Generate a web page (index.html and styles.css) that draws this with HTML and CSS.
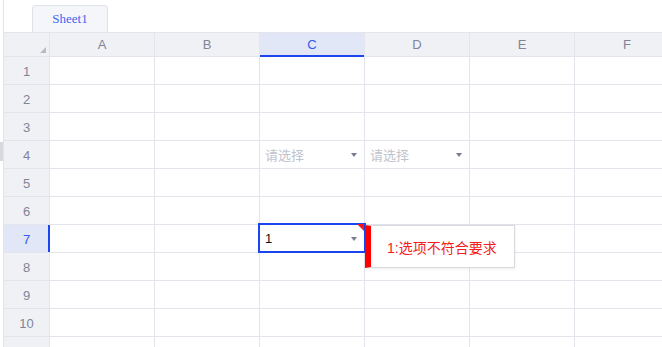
FILE: index.html
```html
<!DOCTYPE html>
<html lang="zh">
<head>
  <meta charset="UTF-8">
  <title>Sheet1</title>
  <link rel="stylesheet" href="styles.css">
</head>
<body>
  <div class="edge-handle"></div>
  <div class="book">
    <div class="tabs">
      <div class="tab">Sheet1</div>
    </div>
    <div class="sheet">
      <div class="corner"></div>
      <div class="col-head">A</div>
      <div class="col-head">B</div>
      <div class="col-head active">C</div>
      <div class="col-head">D</div>
      <div class="col-head">E</div>
      <div class="col-head">F</div>

      <div class="row-head">1</div><div class="cell"></div><div class="cell"></div><div class="cell"></div><div class="cell"></div><div class="cell"></div><div class="cell"></div>
      <div class="row-head">2</div><div class="cell"></div><div class="cell"></div><div class="cell"></div><div class="cell"></div><div class="cell"></div><div class="cell"></div>
      <div class="row-head">3</div><div class="cell"></div><div class="cell"></div><div class="cell"></div><div class="cell"></div><div class="cell"></div><div class="cell"></div>
      <div class="row-head">4</div><div class="cell"></div><div class="cell"></div>
      <div class="cell select"><span class="placeholder">请选择</span><span class="arrow"></span></div>
      <div class="cell select"><span class="placeholder">请选择</span><span class="arrow"></span></div>
      <div class="cell"></div><div class="cell"></div>
      <div class="row-head">5</div><div class="cell"></div><div class="cell"></div><div class="cell"></div><div class="cell"></div><div class="cell"></div><div class="cell"></div>
      <div class="row-head">6</div><div class="cell"></div><div class="cell"></div><div class="cell"></div><div class="cell"></div><div class="cell"></div><div class="cell"></div>
      <div class="row-head active">7</div><div class="cell"></div><div class="cell"></div>
      <div class="cell select current invalid">
        <span class="value">1</span><span class="arrow"></span>
        <div class="tip">1:选项不符合要求</div>
      </div>
      <div class="cell"></div><div class="cell"></div><div class="cell"></div>
      <div class="row-head">8</div><div class="cell"></div><div class="cell"></div><div class="cell"></div><div class="cell"></div><div class="cell"></div><div class="cell"></div>
      <div class="row-head">9</div><div class="cell"></div><div class="cell"></div><div class="cell"></div><div class="cell"></div><div class="cell"></div><div class="cell"></div>
      <div class="row-head">10</div><div class="cell"></div><div class="cell"></div><div class="cell"></div><div class="cell"></div><div class="cell"></div><div class="cell"></div>
      <div class="row-head blank"></div><div class="cell"></div><div class="cell"></div><div class="cell"></div><div class="cell"></div><div class="cell"></div><div class="cell"></div>
    </div>
  </div>
</body>
</html>
```

FILE: styles.css
```css
html, body { margin: 0; overflow: hidden; background: #fff; }
body { font-family: "Liberation Sans", "Noto Sans CJK SC", sans-serif; font-size: 13px; width: 662px; height: 347px; position: relative; }

.edge-handle { position: absolute; left: 0; top: 142px; width: 3px; height: 19px; background: #d8d9de; }

.book { margin-left: 3px; border-left: 1px solid #e2e3eb; width: 658px; height: 347px; overflow: hidden; }

.tabs { height: 32px; padding-left: 28px; display: flex; align-items: flex-end; }
.tab { width: 74px; height: 26px; border: 1px solid #e0e2ea; border-bottom: none; border-radius: 4px 4px 0 0; background: #f5f6fa; color: #3f66f2; font-family: "Liberation Serif", serif; font-size: 13px; display: flex; align-items: center; justify-content: center; }

.sheet { display: grid; grid-template-columns: 45px repeat(6, 104px); grid-template-rows: 23px; grid-auto-rows: 27px; gap: 1px; padding: 1px 0; background: #e3e4ec; width: 675px; }
.sheet > div { background: #fff; }

.corner { background: #f0f1f4 !important; position: relative; }
.corner::after { content: ""; position: absolute; right: 3px; bottom: 3px; border-style: solid; border-width: 0 0 6px 6px; border-color: transparent transparent #b8bac3 transparent; }

.col-head, .row-head { background: #f0f1f4 !important; color: #80849a; display: flex; align-items: center; justify-content: center; font-size: 13px; }
.row-head { padding-top: 1px; }
.col-head.active { background: #e1e7f6 !important; color: #2f5bf0; position: relative; }
.col-head.active::after { content: ""; position: absolute; left: 0; right: 0; bottom: -1px; height: 2px; background: #1a45ef; }
.row-head.active { background: #e1e7f6 !important; color: #2f5bf0; position: relative; }
.row-head.active::after { content: ""; position: absolute; right: -1px; top: 0; bottom: 0; width: 2px; background: #1a45ef; }

.cell.select { display: flex; align-items: center; justify-content: space-between; padding: 0 7px 0 5px; }
.placeholder { color: #c1c3cc; }
.value { color: #111; }
.arrow { width: 0; height: 0; border-style: solid; border-width: 4px 3.5px 0 3.5px; border-color: #777c90 transparent transparent transparent; margin-top: 1px; }

.cell.current { position: relative; z-index: 2; }
.cell.current::before { content: ""; position: absolute; left: -2px; right: -2px; top: -2px; bottom: -1px; border: 2px solid #1a45ef; pointer-events: none; }
.cell.invalid::after { content: ""; position: absolute; right: 0; top: -1px; border-style: solid; border-width: 0 7px 7px 0; border-color: transparent #f01818 transparent transparent; }

.tip { position: absolute; left: 105px; top: 0; width: 127px; height: 41px; padding-left: 16px; border: 1px solid #d9d9de; border-left: 6px solid #ff0000; background: #fff; color: #f21d1d; font-size: 14px; display: flex; align-items: center; box-shadow: 0 1px 3px rgba(0,0,0,0.08); white-space: nowrap; }
```
